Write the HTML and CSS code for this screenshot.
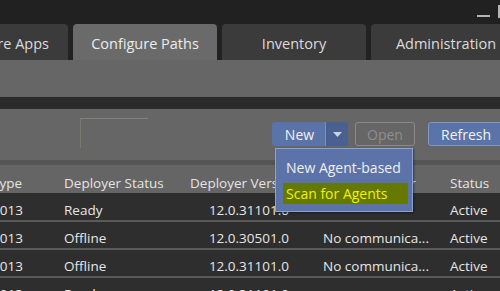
FILE: index.html
```html
<!DOCTYPE html>
<html>
<head>
<meta charset="utf-8">
<link rel="stylesheet" href="styles.css">
</head>
<body>
<div class="app">
  <div class="titlebar">
    <span class="ctl-min"></span>
    <span class="ctl-max"></span>
  </div>
  <div class="tabs">
    <div class="tab">Configure Apps</div>
    <div class="tab active">Configure Paths</div>
    <div class="tab">Inventory</div>
    <div class="tab">Administration</div>
  </div>
  <div class="panel"></div>
  <div class="band"></div>
  <div class="toolbar">
    <div class="ghost-box"></div>
    <div class="actions">
      <div class="split">
        <span class="split-main">New</span>
        <span class="split-arrow"><svg width="9" height="5" viewBox="0 0 9 5"><path d="M0 0H9L4.5 5Z" fill="#c9d2e6"/></svg></span>
      </div>
      <div class="btn disabled">Open</div>
      <div class="btn primary">Refresh</div>
    </div>
  </div>
  <div class="sep"></div>
  <div class="grid">
    <div class="row head">
      <span class="c1">Type</span><span class="c2">Deployer Status</span><span class="c3h">Deployer Version</span><span class="c4">Deployer Error</span><span class="c5">Status</span>
    </div>
    <div class="row">
      <span class="c1">2013</span><span class="c2">Ready</span><span class="c3">12.0.31101.0</span><span class="c4"></span><span class="c5">Active</span>
    </div>
    <div class="row">
      <span class="c1">2013</span><span class="c2">Offline</span><span class="c3">12.0.30501.0</span><span class="c4">No communica...</span><span class="c5">Active</span>
    </div>
    <div class="row">
      <span class="c1">2013</span><span class="c2">Offline</span><span class="c3">12.0.31101.0</span><span class="c4">No communica...</span><span class="c5">Active</span>
    </div>
    <div class="row">
      <span class="c1">2013</span><span class="c2">Ready</span><span class="c3">12.0.31101.0</span><span class="c4"></span><span class="c5">Active</span>
    </div>
  </div>
  <div class="menu">
    <div class="menu-item">New Agent-based</div>
    <div class="menu-item hl">Scan for Agents</div>
  </div>
</div>
</body>
</html>
```
FILE: styles.css
```css
html, body {
  margin: 0;
  padding: 0;
  width: 500px;
  height: 291px;
  overflow: hidden;
  background: #222222;
}
.app {
  position: relative;
  width: 500px;
  height: 291px;
  overflow: hidden;
  font-family: "Open Sans", "Noto Sans", sans-serif;
  font-size: 13px;
  color: #e6e6e6;
}
.titlebar {
  height: 24px;
  background: #212121;
  display: flex;
  justify-content: flex-end;
  align-items: flex-start;
  gap: 8px;
  margin-right: -11px;
}
.ctl-min {
  width: 13px;
  height: 2px;
  background: #b5b5b5;
  margin-top: 15px;
}
.ctl-max {
  width: 9px;
  height: 9px;
  border: 2px solid #b5b5b5;
  margin-top: 5px;
}
.tabs {
  height: 36px;
  display: flex;
  gap: 5px;
  margin-left: -76px;
  background: #222222;
}
.tab {
  flex: 0 0 144px;
  background: #3b3b3b;
  border-radius: 4px 4px 0 0;
  display: flex;
  align-items: center;
  justify-content: center;
  font-size: 14.5px;
  color: #dcdcdc;
  padding-top: 2px;
  box-sizing: border-box;
  white-space: nowrap;
}
.tab:first-child { justify-content: flex-end; padding-right: 19px; }
.tab:last-child { flex-basis: 150px; }
.tab.active {
  background: #6a6a6a;
  color: #ececec;
}
.panel {
  height: 37px;
  background: #666666;
}
.band {
  height: 12px;
  background: #2b2b2b;
}
.toolbar {
  height: 51px;
  background: #666666;
  display: flex;
  align-items: flex-start;
  justify-content: space-between;
  box-sizing: border-box;
  padding-top: 13px;
}
.ghost-box {
  margin-left: 80px;
  margin-top: -4px;
  width: 68px;
  height: 30px;
  border-top: 1px solid #7d8573;
  border-left: 1px solid #767d6e;
  box-sizing: border-box;
}
.actions {
  display: flex;
  gap: 7px;
  margin-right: -7px;
}
.split {
  display: flex;
  height: 24px;
  width: 76px;
  border-radius: 3px;
  overflow: hidden;
}
.split-main {
  flex: 1;
  background: #5a73a8;
  color: #f2f2f2;
  display: flex;
  align-items: center;
  justify-content: center;
  font-size: 14px;
  padding-left: 2px;
}
.split-arrow {
  width: 22px;
  background: #4a6091;
  border-left: 1px solid #7f90b7;
  display: flex;
  align-items: center;
  justify-content: center;
}
.btn {
  height: 24px;
  box-sizing: border-box;
  border-radius: 3px;
  display: flex;
  align-items: center;
  justify-content: center;
  font-size: 14px;
}
.btn.disabled {
  width: 60px;
  border: 1px solid #8a8a8a;
  color: #8e8e8e;
  margin-right: 6px;
}
.btn.primary {
  width: 79px;
  background: #5a73a8;
  border: 1px solid #8598c2;
  color: #f2f2f2;
  justify-content: flex-start;
  padding-left: 12px;
}
.sep {
  height: 5px;
  background: #555555;
}
.grid {
  margin-left: -8px;
}
.row {
  display: grid;
  grid-template-columns: 72px 126px 133px 127px 1fr;
  height: 28px;
  padding-top: 6px;
  align-items: center;
  background: #2e2e2e;
  border-bottom: 2px solid #5a5a5a;
  box-sizing: border-box;
  font-size: 13.5px;
  white-space: nowrap;
}
.row.head {
  height: 29px;
  padding-top: 7px;
  background: #656565;
  border-bottom: 1px solid #2e2e2e;
  color: #e4e4e4;
}
.c3 {
  text-align: right;
  padding-right: 34px;
}
.menu {
  position: absolute;
  left: 275px;
  top: 148px;
  width: 138px;
  height: 64px;
  box-sizing: border-box;
  background: #5b73a8;
  border: 1px solid #8ea2cf;
  padding: 5px 4px 0 7px;
  display: flex;
  flex-direction: column;
  gap: 3px;
  box-shadow: 1px 1px 2px rgba(0,0,0,0.4);
}
.menu-item {
  height: 26px;
  display: flex;
  align-items: center;
  padding-left: 3px;
  font-size: 14px;
  color: #f0f0f0;
  white-space: nowrap;
}
.menu-item.hl {
  height: 21px;
  background: #657800;
  color: #f2f200;
}
```
